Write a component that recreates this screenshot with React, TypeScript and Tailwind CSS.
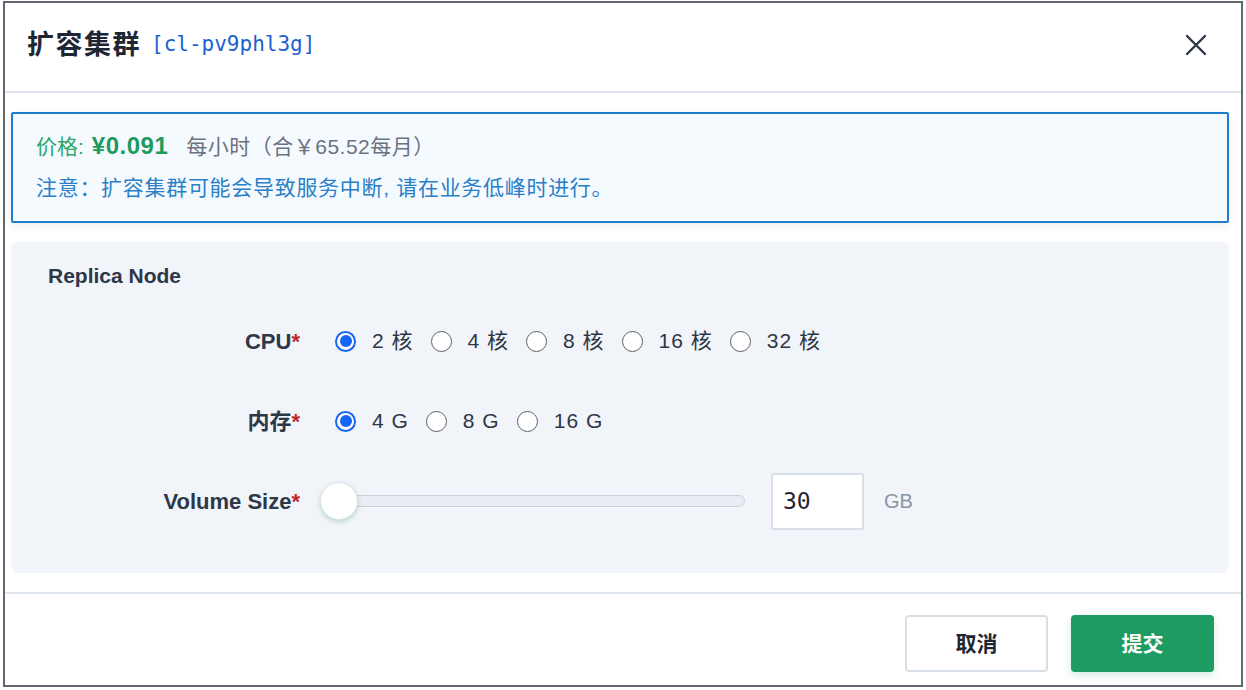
import React, { useState } from "react";

const sans = "font-['Liberation_Sans','Noto_Sans_CJK_SC',sans-serif]";
const mono = "font-['DejaVu_Sans_Mono','Liberation_Mono',monospace]";

const Radio: React.FC<{ checked: boolean; label: string; onClick: () => void }> = ({
  checked,
  label,
  onClick,
}) => (
  <button onClick={onClick} className="flex items-center mr-[17px]">
    {checked ? (
      <span className="w-[21px] h-[21px] rounded-full border-2 border-[#1766f2] bg-white flex items-center justify-center">
        <span className="w-[12px] h-[12px] rounded-full bg-[#1766f2]" />
      </span>
    ) : (
      <span className="w-[21px] h-[21px] rounded-full border-[1.5px] border-[#5c5f66] bg-white" />
    )}
    <span className="ml-[16px] text-[21px] text-[#2d3748] tracking-[1px]">{label}</span>
  </button>
);

const Label: React.FC<{ text: string }> = ({ text }) => (
  <div className="w-[289px] text-right text-[22px] font-bold text-[#2d3748] shrink-0">
    {text}
    <span className="text-[#c0262d]">*</span>
  </div>
);

export default function App() {
  const [cpu, setCpu] = useState("2 核");
  const [mem, setMem] = useState("4 G");

  return (
    <div className={`w-[1246px] h-[690px] bg-white pl-[3px] pt-[1px] ${sans}`}>
      <div className="w-[1240px] h-[686px] border-2 border-[#62666f] flex flex-col">
        {/* header */}
        <div className="h-[90px] shrink-0 border-b-2 border-[#dfe5ec] flex items-center pl-[22px] pr-[34px] pb-[4px]">
          <span className="text-[27px] font-bold text-[#1f2633] tracking-[1.5px]">扩容集群</span>
          <span className={`ml-[10px] text-[21px] text-[#1d5fd1] ${mono}`}>[cl-pv9phl3g]</span>
          <button className="ml-auto text-[#2d3748]">
            <svg width="22" height="22" viewBox="0 0 22 22" fill="none" stroke="currentColor" strokeWidth="2.4" strokeLinecap="round">
              <path d="M2 2L20 20M20 2L2 20" />
            </svg>
          </button>
        </div>

        {/* body */}
        <div className="flex flex-col pl-[6px] pr-[12px] pt-[19px]">
          <div className="h-[111px] border-2 border-[#1f7bd0] bg-[#f5faff] rounded-[2px] shadow-[0_3px_8px_rgba(0,0,0,0.08)] pl-[23px] pt-[14px]">
            <div className="flex items-baseline h-[32px]">
              <span className="text-[21px] text-[#2ea56a]">价格:</span>
              <span className="ml-[8px] text-[24px] font-bold text-[#1f9a5e] tracking-[0.5px]">¥0.091</span>
              <span className="ml-[18px] text-[21px] text-[#6b7280] tracking-[0.5px]">每小时（合￥65.52每月）</span>
            </div>
            <div className="mt-[12px] text-[21px] text-[#2a7fc6] tracking-[0.7px]">
              注意：扩容集群可能会导致服务中断, 请在业务低峰时进行。
            </div>
          </div>

          <div className="mt-[19px] h-[331px] bg-[#f1f4f8] rounded-[8px] pt-[21px]">
            <div className="pl-[37px] text-[21px] font-bold text-[#2d3748] h-[26px] leading-[26px]">Replica Node</div>

            <div className="flex items-center mt-[37px] h-[30px]">
              <Label text="CPU" />
              <div className="flex items-center ml-[35px]">
                {["2 核", "4 核", "8 核", "16 核", "32 核"].map((o) => (
                  <Radio key={o} label={o} checked={cpu === o} onClick={() => setCpu(o)} />
                ))}
              </div>
            </div>

            <div className="flex items-center mt-[50px] h-[30px]">
              <Label text="内存" />
              <div className="flex items-center ml-[35px]">
                {["4 G", "8 G", "16 G"].map((o) => (
                  <Radio key={o} label={o} checked={mem === o} onClick={() => setMem(o)} />
                ))}
              </div>
            </div>

            <div className="flex items-center mt-[36px] h-[58px]">
              <Label text="Volume Size" />
              <div className="ml-[20px] relative w-[425px] h-[40px] flex items-center">
                <div className="ml-[10px] w-[415px] h-[12px] rounded-full bg-[#e9eef4] border border-[#c9d3de]" />
                <div className="absolute left-0 top-[1px] w-[38px] h-[38px] rounded-full bg-white border border-[#dde3ea] shadow-[0_2px_4px_rgba(80,160,140,0.35)]" />
              </div>
              <div className="ml-[26px] w-[93px] h-[57px] bg-white border-2 border-[#d8dfe7] rounded-[2px] flex items-center pl-[10px]">
                <span className={`text-[23px] text-[#1f2633] ${mono}`}>30</span>
              </div>
              <span className="ml-[20px] text-[20px] text-[#8a94a3]">GB</span>
            </div>
          </div>
        </div>

        {/* footer */}
        <div className="mt-[19px] border-t-2 border-[#dfe5ec] flex-1 flex items-start justify-end pr-[27px] pt-[21px]">
          <button className="w-[143px] h-[57px] bg-white border-2 border-[#d8dfe7] rounded-[4px] text-[21px] font-bold text-[#1f2633]">
            取消
          </button>
          <button className="ml-[23px] w-[143px] h-[57px] bg-[#1e9b63] rounded-[4px] text-[21px] font-bold text-white shadow-[0_3px_8px_rgba(30,155,99,0.2)]">
            提交
          </button>
        </div>
      </div>
    </div>
  );
}
